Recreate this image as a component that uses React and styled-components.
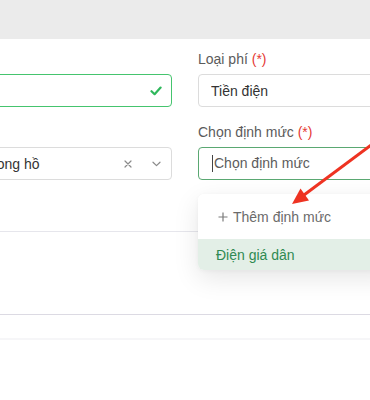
import React from 'react';
import styled, { createGlobalStyle } from 'styled-components';

const GlobalStyle = createGlobalStyle`
  html, body {
    margin: 0;
    padding: 0;
    background: #fff;
    overflow: hidden;
  }
  body {
    font-family: "Liberation Sans", Arial, sans-serif;
    -webkit-font-smoothing: antialiased;
  }
`;

const Page = styled.div`
  position: relative;
  width: 370px;
  height: 400px;
  overflow: hidden;
`;

const TopBar = styled.div`
  height: 39px;
  background: #ebebeb;
`;

const FormGrid = styled.div`
  display: grid;
  grid-template-columns: 200px 200px;
  column-gap: 26px;
  row-gap: 17px;
  margin-left: -28px;
  padding-top: 12px;
`;

const Field = styled.div`
  display: flex;
  flex-direction: column;
`;

const Label = styled.div`
  height: 16px;
  line-height: 16px;
  font-size: 14px;
  color: #5b5b5b;
  margin-bottom: 7px;
  white-space: nowrap;
`;

const Req = styled.span`
  color: #e53935;
`;

const InputBox = styled.div`
  box-sizing: border-box;
  height: 33px;
  border: 1px solid ${(p) => p.$border || '#dcdcdc'};
  border-radius: 4px;
  display: flex;
  align-items: center;
  padding: 0 ${(p) => p.$padRight || 12}px 0 ${(p) => p.$padLeft || 12}px;
  font-size: 14px;
  color: ${(p) => p.$color || '#333'};
  gap: 8px;
  background: #fff;
`;

const Value = styled.span`
  flex: 1;
  white-space: nowrap;
  overflow: hidden;
`;

const Caret = styled.span`
  display: inline-block;
  width: 1px;
  height: 17px;
  background: #444;
  margin-right: 1px;
  vertical-align: middle;
`;

const Divider = styled.div`
  height: 1px;
  background: ${(p) => p.$color};
  margin-top: ${(p) => p.$top}px;
`;

const FooterBand = styled.div`
  height: 2px;
  background: #f6f6f8;
  margin-top: 23px;
`;

const Menu = styled.div`
  position: absolute;
  top: 194px;
  left: 198px;
  width: 200px;
  border-radius: 6px;
  background: #fff;
  box-shadow: 0 8px 26px rgba(0, 0, 0, 0.1), 0 1px 4px rgba(0, 0, 0, 0.04);
  overflow: hidden;
`;

const MenuItem = styled.div`
  display: flex;
  align-items: center;
  gap: 5px;
  height: ${(p) => p.$h}px;
  padding-left: ${(p) => p.$pl}px;
  padding-top: ${(p) => p.$pt || 0}px;
  box-sizing: border-box;
  font-size: 14px;
  color: ${(p) => (p.$active ? '#2f8a52' : '#6b6b6b')};
  background: ${(p) => (p.$active ? '#e3efe7' : '#fff')};
  white-space: nowrap;
`;

const ArrowLayer = styled.svg`
  position: absolute;
  inset: 0;
  pointer-events: none;
`;

const Check = () => (
  <svg width="12" height="10" viewBox="0 0 12 10">
    <path d="M1.5 5.2 L4.6 8.2 L10.6 1.6" fill="none" stroke="#2fb85c" strokeWidth="2.2" strokeLinecap="round" strokeLinejoin="round" />
  </svg>
);

const ClearIcon = () => (
  <svg width="8" height="8" viewBox="0 0 8 8">
    <path d="M1 1 L7 7 M7 1 L1 7" stroke="#8a8a8a" strokeWidth="1.2" strokeLinecap="round" />
  </svg>
);

const Chevron = () => (
  <svg width="9" height="6" viewBox="0 0 9 6">
    <path d="M1 1.2 L4.5 4.6 L8 1.2" fill="none" stroke="#8a8a8a" strokeWidth="1.2" strokeLinecap="round" strokeLinejoin="round" />
  </svg>
);

const PlusIcon = () => (
  <svg width="10" height="10" viewBox="0 0 10 10">
    <path d="M5 0.5 V9.5 M0.5 5 H9.5" stroke="#7a7a7a" strokeWidth="1.2" />
  </svg>
);

export default function App() {
  return (
    <Page>
      <GlobalStyle />
      <TopBar />
      <FormGrid>
        <Field>
          <Label />
          <InputBox $border="#45c46e" $padRight={9}>
            <Value />
            <Check />
          </InputBox>
        </Field>
        <Field>
          <Label>
            Loại phí <Req>(*)</Req>
          </Label>
          <InputBox>
            <Value>Tiền điện</Value>
          </InputBox>
        </Field>
        <Field>
          <Label />
          <InputBox $padLeft={11} $padRight={10}>
            <Value>Trong hồ</Value>
            <ClearIcon />
            <span style={{ width: 4 }} />
            <Chevron />
          </InputBox>
        </Field>
        <Field>
          <Label>
            Chọn định mức <Req>(*)</Req>
          </Label>
          <InputBox $border="#5aa872" $color="#5c5c5c" $padLeft={13}>
            <Value>
              <Caret />
              Chọn định mức
            </Value>
          </InputBox>
        </Field>
      </FormGrid>
      <Divider $color="#e6e6ec" $top={51} />
      <Divider $color="#dcdae3" $top={82} />
      <FooterBand />

      <Menu>
        <MenuItem $h={45} $pl={20} $pt={1}>
          <PlusIcon />
          Thêm định mức
        </MenuItem>
        <MenuItem $h={31} $pl={18} $active>
          Điện giá dân
        </MenuItem>
      </Menu>

      <ArrowLayer width="370" height="400" viewBox="0 0 370 400">
        <line x1="374" y1="143" x2="304" y2="195" stroke="#ee3322" strokeWidth="3" />
        <polygon points="292,204 309,200.5 300.5,188.5" fill="#ee3322" />
      </ArrowLayer>
    </Page>
  );
}
